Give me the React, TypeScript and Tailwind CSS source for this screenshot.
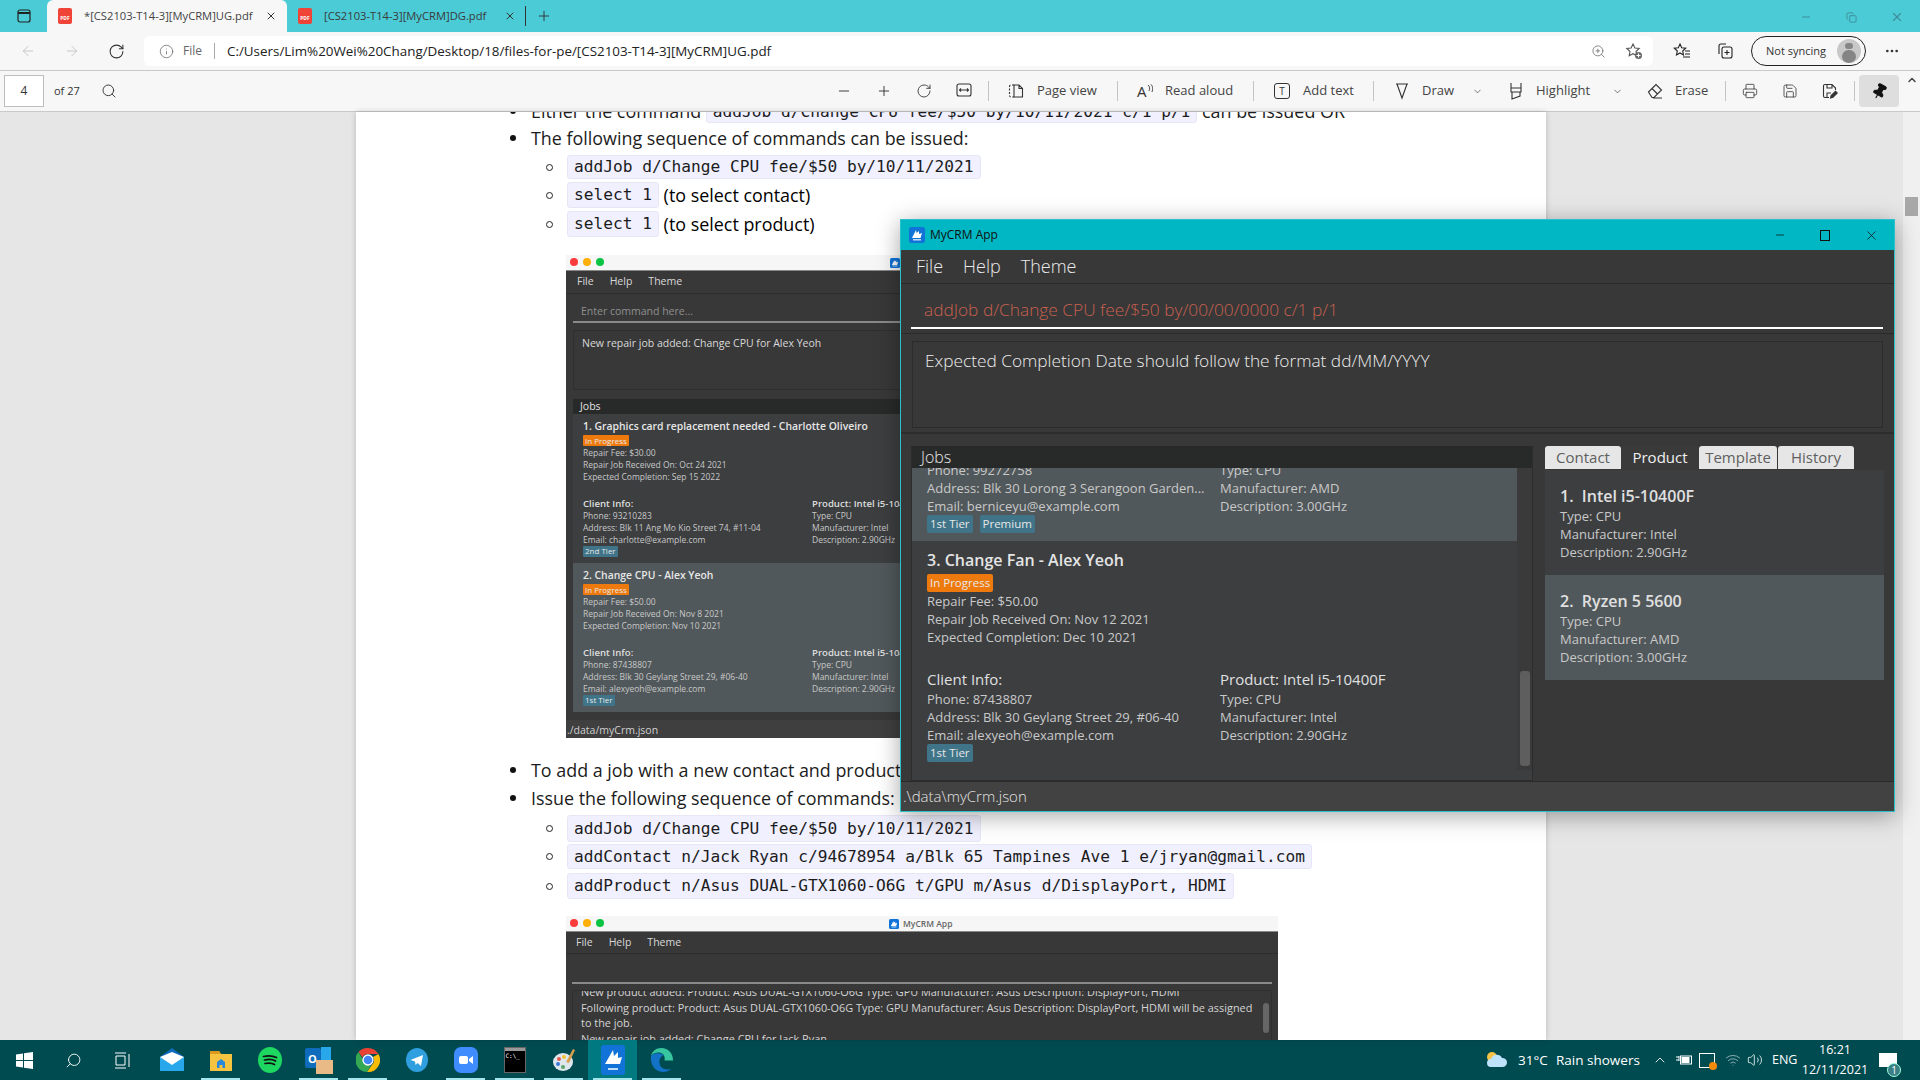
import type { ReactNode } from "react";
import {
  ArrowLeft,
  ArrowRight,
  ChevronDown,
  ChevronUp,
  Copy,
  Info,
  Minus,
  MoreHorizontal,
  Pin,
  Plus,
  Printer,
  RotateCw,
  Save,
  Search,
  Volume2,
  Wifi,
  X,
  ZoomIn,
} from "lucide-react";

const MONO = "font-['DejaVu_Sans_Mono',monospace]";

function PdfIcon() {
  return (
    <span className="flex h-4 w-[14px] shrink-0 items-end justify-center overflow-hidden rounded-[2px] bg-[#f04438] pb-[3px] text-[5px] font-bold leading-none text-white">
      PDF
    </span>
  );
}

function StarPlus() {
  return (
    <svg width="18" height="18" viewBox="0 0 18 18" fill="none" stroke="#555" strokeWidth="1.1" className="ml-[19px] mr-[10px] shrink-0">
      <path d="M8 2l1.900 4 4.300.5-3.200 3 .8 4.300L8 11.700 4.200 13.800l.8-4.300-3.200-3 4.300-.5z" />
      <circle cx="13.500" cy="13.500" r="3.500" fill="#666" stroke="none" />
      <path d="M13.500 11.500v4M11.500 13.500h4" stroke="#fff" />
    </svg>
  );
}

function Favorites() {
  return (
    <svg width="18" height="18" viewBox="0 0 18 18" fill="none" stroke="#222" strokeWidth="1.1" className="ml-[20px] shrink-0">
      <path d="M7 2l1.700 3.800 4 .4-3 2.800.8 4L7 11l-3.500 2 .8-4-3-2.800 4-.4z" />
      <path d="M12 9h5M12 12h5M10 15h7" />
    </svg>
  );
}

function Collections() {
  return (
    <svg width="18" height="18" viewBox="0 0 18 18" fill="none" stroke="#222" strokeWidth="1.1" className="ml-[25px] shrink-0">
      <path d="M3 12V4a2 2 0 0 1 2-2h5" />
      <rect x="6" y="5" width="10" height="11" rx="2" />
      <path d="M11 8v5M8.500 10.500h5" />
    </svg>
  );
}

function BrowserTabs() {
  return (
    <div className="flex h-8 items-end bg-[#4acbd6] text-[#333]">
      <div className="flex h-8 w-[47px] items-center pl-[17px]">
        <svg width="14" height="14" viewBox="0 0 14 14" fill="none" stroke="#222" strokeWidth="1.2">
          <rect x="1" y="1" width="12" height="12" rx="2" />
          <path d="M1 4h12" strokeWidth="2" />
        </svg>
      </div>
      <div className="flex h-8 w-[240px] items-center rounded-t-md bg-[#f7f7f7] pl-[11px]">
        <PdfIcon />
        <span className="ml-[12px] w-[174px] whitespace-nowrap text-[11.2px] text-[#444]">*[CS2103-T14-3][MyCRM]UG.pdf</span>
        <X size={12} className="ml-[7px]" />
      </div>
      <div className="flex h-8 w-[238px] items-center pl-[11px]">
        <PdfIcon />
        <span className="ml-[12px] w-[170px] whitespace-nowrap text-[11.2px] text-[#3a3a3a]">[CS2103-T14-3][MyCRM]DG.pdf</span>
        <X size={12} className="ml-[10px]" />
      </div>
      <div className="mb-[6px] h-5 w-px bg-[#333]" />
      <Plus size={16} strokeWidth={1.4} className="mb-2 ml-[10px]" />
      <div className="mb-2 ml-auto flex items-center text-[#3f8f97]">
        <Minus size={12} />
        <Copy size={11} className="ml-[34px]" />
        <X size={14} className="ml-[33px] mr-[16px]" />
      </div>
    </div>
  );
}

function AddressBar() {
  return (
    <div className="flex h-[39px] items-center border-b border-[#c9c9c9] bg-[#f7f7f7] text-[#333]">
      <ArrowLeft size={16} strokeWidth={1.4} className="ml-5 text-[#c4c4c4]" />
      <ArrowRight size={16} strokeWidth={1.4} className="ml-7 text-[#c4c4c4]" />
      <RotateCw size={17} strokeWidth={1.5} className="ml-7" />
      <div className="ml-[19px] flex h-[30px] w-[1509px] items-center rounded-md bg-white text-[12px]">
        <Info size={15} strokeWidth={1.2} className="ml-[15px] text-[#666]" />
        <span className="ml-[9px] text-[#666]">File</span>
        <span className="ml-3 h-4 w-px bg-[#aaa]" />
        <span className="ml-3 whitespace-nowrap text-[13.4px] text-[#222]">
          C:/Users/Lim%20Wei%20Chang/Desktop/18/files-for-pe/[CS2103-T14-3][MyCRM]UG.pdf
        </span>
        <ZoomIn size={15} strokeWidth={1.2} className="ml-auto text-[#666]" />
        <StarPlus />
      </div>
      <Favorites />
      <Collections />
      <div className="ml-[17px] flex h-[30px] w-[115px] items-center rounded-full border border-[#222] pl-[14px] text-[11px]">
        <span className="w-[66px] whitespace-nowrap">Not syncing</span>
        <span className="ml-[5px] flex h-[24px] w-[24px] flex-col items-center overflow-hidden rounded-full bg-[#c8c8c8]">
          <span className="mt-[4px] h-2 w-2 rounded-full bg-[#858585]" />
          <span className="mt-[1px] h-4 w-[14px] rounded-full bg-[#858585]" />
        </span>
      </div>
      <MoreHorizontal size={16} className="ml-[18px]" />
    </div>
  );
}

function Sep({ className }: { className: string }) {
  return <span className={`h-5 w-px shrink-0 bg-[#c4c4c4] ${className}`} />;
}

function Slot({ children }: { children: ReactNode }) {
  return <span className="flex w-10 shrink-0 justify-center">{children}</span>;
}

function ToolLabel({ className, children }: { className: string; children: ReactNode }) {
  return <span className={`shrink-0 whitespace-nowrap text-[13px] text-[#444] ${className}`}>{children}</span>;
}

function PdfToolbar() {
  return (
    <div className="flex h-[41px] items-center border-b border-[#c9c9c9] bg-[#f7f7f7] text-[#333]">
      <div className="ml-1 flex h-8 w-10 shrink-0 items-center justify-center border border-[#bdbdbd] bg-white text-[12px]">4</div>
      <span className="ml-[10px] w-[27px] shrink-0 whitespace-nowrap text-[11px]">of 27</span>
      <Search size={16} strokeWidth={1.4} className="ml-5 shrink-0" />
      <span className="ml-[707px] flex">
        <Slot><Minus size={16} strokeWidth={1.4} /></Slot>
        <Slot><Plus size={16} strokeWidth={1.4} /></Slot>
        <Slot><RotateCw size={16} strokeWidth={1.3} /></Slot>
        <Slot>
          <svg width="16" height="14" viewBox="0 0 16 14" fill="none" stroke="#333" strokeWidth="1.1">
            <rect x="1" y="1" width="14" height="12" rx="2" />
            <path d="M3.500 7h9M5 5.500 3.500 7 5 8.500M11 5.500 12.500 7 11 8.500" />
          </svg>
        </Slot>
      </span>
      <Sep className="ml-1" />
      <svg width="16" height="16" viewBox="0 0 16 16" fill="none" stroke="#333" strokeWidth="1.1" className="ml-[19px] shrink-0">
        <path d="M6 2H3a1.500 1.500 0 0 0-1.500 1.500v9A1.500 1.500 0 0 0 3 14h3" strokeDasharray="2 1.500" />
        <path d="M6 2h5l3.500 3.500V14H6z M11 2v3.500h3.500" />
      </svg>
      <ToolLabel className="ml-[13px] w-[62px]">Page view</ToolLabel>
      <Sep className="ml-[18px]" />
      <span className="ml-[19px] flex w-4 shrink-0 items-start">
        <span className="text-[15px] leading-none text-[#333]">A</span>
        <svg width="6" height="9" viewBox="0 0 6 9" fill="none" stroke="#333" strokeWidth="0.9" className="shrink-0">
          <path d="M1 1c2 1.500 2 4 1 6M3.500 0c2.500 2 2.500 5 1.500 8" />
        </svg>
      </span>
      <ToolLabel className="ml-3 w-[70px]">Read aloud</ToolLabel>
      <Sep className="ml-[18px]" />
      <span className="ml-5 flex h-4 w-4 shrink-0 items-center justify-center rounded-[3px] border border-[#333] text-[10px] leading-none">T</span>
      <ToolLabel className="ml-[13px] w-[52px]">Add text</ToolLabel>
      <Sep className="ml-[18px]" />
      <svg width="16" height="18" viewBox="0 0 16 18" fill="none" stroke="#333" strokeWidth="1.1" className="ml-5 shrink-0">
        <path d="M2 2h12M3 2l5 14 5-14" />
      </svg>
      <ToolLabel className="ml-3 w-[31px]">Draw</ToolLabel>
      <ChevronDown size={11} strokeWidth={1.4} className="ml-[19px] shrink-0" />
      <svg width="16" height="18" viewBox="0 0 16 18" fill="none" stroke="#333" strokeWidth="1.1" className="ml-[25px] shrink-0">
        <path d="M3 1v5h10V1M3 6v4h10V6M4 10v7l8-3v-4" />
      </svg>
      <ToolLabel className="ml-3 w-[58px]">Highlight</ToolLabel>
      <ChevronDown size={11} strokeWidth={1.4} className="ml-[18px] shrink-0" />
      <svg width="16" height="16" viewBox="0 0 16 16" fill="none" stroke="#333" strokeWidth="1.1" className="ml-[24px] shrink-0">
        <path d="M1.500 9 9 1.500 14.500 7 7 14.500H5zM5 5.500 10.500 11M6 15h9" />
      </svg>
      <ToolLabel className="ml-3 w-8">Erase</ToolLabel>
      <Sep className="ml-[18px]" />
      <Printer size={16} strokeWidth={1.2} className="ml-4 shrink-0" />
      <Save size={16} strokeWidth={1.2} className="ml-6 shrink-0" />
      <svg width="16" height="16" viewBox="0 0 16 16" fill="none" stroke="#333" strokeWidth="1.1" className="ml-6 shrink-0">
        <path d="M7 14.500H3a1.500 1.500 0 0 1-1.500-1.500V3A1.500 1.500 0 0 1 3 1.500h7L13.500 5v2M5 1.500V5h5V1.500M5 14v-4h4" />
        <path d="M8.500 15l.7-2.500 4.300-4.300 1.800 1.800-4.300 4.300z" fill="#333" />
      </svg>
      <Sep className="ml-4" />
      <span className="ml-1 flex h-8 w-10 shrink-0 items-center justify-center rounded-sm bg-[#dedede]">
        <Pin size={17} fill="#111" strokeWidth={1.5} className="rotate-[30deg] text-[#111]" />
      </span>
    </div>
  );
}

function Disc({ className }: { className: string }) {
  return <span className={`h-[6px] w-[6px] shrink-0 rounded-full bg-[#111] ${className}`} />;
}

function Ring() {
  return <span className="ml-[190px] h-[7px] w-[7px] shrink-0 rounded-full border-[1.5px] border-[#222]" />;
}

function Code({ className, children }: { className?: string; children: ReactNode }) {
  return (
    <span className={`flex h-full items-center whitespace-nowrap rounded-[3px] border border-[#e6e6f6] bg-[#f0f0ff] px-[6px] pt-px text-[16.2px] text-[#1c1c1c] ${MONO} ${className ?? ""}`}>
      {children}
    </span>
  );
}

function CodeRow({ className, children }: { className: string; children: ReactNode }) {
  return (
    <div className={`flex items-center ${className}`}>
      <Ring />
      <span className="ml-[14px] flex h-full items-center text-[17.9px]">{children}</span>
    </div>
  );
}

function Bullet({ className, children }: { className: string; children: ReactNode }) {
  return (
    <div className={`flex h-6 items-center whitespace-nowrap text-[17.9px] leading-6 text-[#1c1c1c] ${className}`}>
      <Disc className="ml-[154px]" />
      <span className="ml-[15px] flex h-6 items-center">{children}</span>
    </div>
  );
}

function CrmLogo({ size }: { size: number }) {
  return (
    <svg width={size} height={size} viewBox="0 0 16 16" className="shrink-0">
      <rect width="16" height="16" rx="2.500" fill="#1173d8" />
      <path d="M3 11 7 3l.5 3L10 4v3l3-1-1.500 5z" fill="#fff" />
      <rect x="4" y="12" width="8" height="1.500" fill="#bcdcf8" />
    </svg>
  );
}

function MacLights() {
  return (
    <span className="ml-1 flex items-center gap-[5px]">
      <span className="h-2 w-2 rounded-full bg-[#fc3b3b]" />
      <span className="h-2 w-2 rounded-full bg-[#fdb003]" />
      <span className="h-2 w-2 rounded-full bg-[#0bc443]" />
    </span>
  );
}

function MiniTag({ orange, children }: { orange?: boolean; children: ReactNode }) {
  return (
    <span className={`flex h-[11px] w-fit items-center rounded-[1px] px-[2px] text-[8px] leading-none text-[#e8e8e8] ${orange ? "bg-[#ee7a0d]" : "bg-[#3f7489]"}`}>
      {children}
    </span>
  );
}

type MiniJobProps = {
  title: string;
  fee: string;
  got: string;
  due: string;
  phone: string;
  address: string;
  email: string;
  tier: string;
  selected?: boolean;
};

function MiniJob({ title, fee, got, due, phone, address, email, tier, selected }: MiniJobProps) {
  return (
    <div className={`h-[149px] pl-[10px] pt-[4px] text-[8.5px] leading-[11.8px] text-[#c8c8c8] ${selected ? "bg-[#51585b]" : "bg-[#3c3e40]"}`}>
      <div className="h-[17px] whitespace-nowrap text-[10.4px] font-semibold leading-4 text-[#e6e6e6]">{title}</div>
      <MiniTag orange>In Progress</MiniTag>
      <div className="mt-[1px]">{fee}</div>
      <div>{got}</div>
      <div>{due}</div>
      <div className="mt-[15px] flex">
        <div className="w-[229px] shrink-0">
          <div className="text-[9.6px] font-semibold leading-[13px] text-[#dedede]">Client Info:</div>
          <div>{phone}</div>
          <div className="whitespace-nowrap">{address}</div>
          <div>{email}</div>
          <MiniTag>{tier}</MiniTag>
        </div>
        <div className="whitespace-nowrap">
          <div className="text-[9.6px] font-semibold leading-[13px] text-[#dedede]">Product: Intel i5-10400F</div>
          <div>Type: CPU</div>
          <div>Manufacturer: Intel</div>
          <div>Description: 2.90GHz</div>
        </div>
      </div>
    </div>
  );
}

function FirstShot() {
  return (
    <div className="ml-[210px] mt-[18px] flex h-[483px] w-[712px] flex-col overflow-hidden bg-[#383838] font-['Open_Sans',sans-serif]">
      <div className="flex h-[16px] shrink-0 items-start border-b border-[#888] bg-[#f6f6f6] pt-[3px]">
        <MacLights />
        <span className="ml-[286px]"><CrmLogo size={10} /></span>
      </div>
      <div className="flex h-[23px] shrink-0 items-center gap-[16px] border-b border-[#2d2d2d] pl-[11px] text-[10.5px] text-[#d8d8d8]">
        <span>File</span><span>Help</span><span>Theme</span>
      </div>
      <div className="mx-[7px] h-[29px] shrink-0 border-b-2 border-[#8a8a8a] pl-2 pt-[9px] text-[10.5px] leading-4 text-[#8f8f8f]">Enter command here...</div>
      <div className="mx-[7px] mt-[7px] h-[60px] shrink-0 border border-[#2f2f2f] pl-2 pt-[4px] text-[10.5px] leading-4 text-[#d8d8d8]">New repair job added: Change CPU for Alex Yeoh</div>
      <div className="mx-[7px] mt-[9px] shrink-0">
        <div className="h-[15px] bg-[#282a2a] pl-[7px] text-[10.5px] leading-[15px] text-[#e0e0e0]">Jobs</div>
        <MiniJob
          title="1. Graphics card replacement needed - Charlotte Oliveiro"
          fee="Repair Fee: $30.00"
          got="Repair Job Received On: Oct 24 2021"
          due="Expected Completion: Sep 15 2022"
          phone="Phone: 93210283"
          address="Address: Blk 11 Ang Mo Kio Street 74, #11-04"
          email="Email: charlotte@example.com"
          tier="2nd Tier"
        />
        <MiniJob
          selected
          title="2. Change CPU - Alex Yeoh"
          fee="Repair Fee: $50.00"
          got="Repair Job Received On: Nov 8 2021"
          due="Expected Completion: Nov 10 2021"
          phone="Phone: 87438807"
          address="Address: Blk 30 Geylang Street 29, #06-40"
          email="Email: alexyeoh@example.com"
          tier="1st Tier"
        />
      </div>
      <div className="mt-[8px] flex h-[18px] shrink-0 items-center bg-[#3f3f3f] pl-px pt-[4px] text-[10.5px] text-[#cfcfcf]">./data/myCrm.json</div>
    </div>
  );
}

function SecondShot() {
  return (
    <div className="ml-[210px] mt-[17px] h-[200px] w-[712px] bg-[#383838] font-['Open_Sans',sans-serif]">
      <div className="flex h-[16px] items-start border-b border-[#888] bg-[#f6f6f6] pt-[3px]">
        <MacLights />
        <span className="ml-[285px]"><CrmLogo size={10} /></span>
        <span className="ml-[4px] text-[8.5px] font-semibold leading-[10px] text-[#666]">MyCRM App</span>
      </div>
      <div className="flex h-[22px] items-center gap-[16px] border-b border-[#2d2d2d] pl-[10px] text-[10.5px] text-[#d8d8d8]">
        <span>File</span><span>Help</span><span>Theme</span>
      </div>
      <div className="mx-[6px] h-[30px] border-b-2 border-[#8a8a8a]" />
      <div className="relative mx-[6px] mt-[6px] h-[100px] overflow-hidden border border-[#2f2f2f] pl-2 text-[10.9px] leading-[15.5px] text-[#d4d4d4]">
        <div className="-mt-[7px] whitespace-nowrap">New product added: Product: Asus DUAL-GTX1060-O6G Type: GPU Manufacturer: Asus Description: DisplayPort, HDMI</div>
        <div className="whitespace-nowrap">Following product: Product: Asus DUAL-GTX1060-O6G Type: GPU Manufacturer: Asus Description: DisplayPort, HDMI will be assigned</div>
        <div>to the job.</div>
        <div>New repair job added: Change CPU for Jack Ryan</div>
        <span className="absolute right-[2px] top-[12px] h-[30px] w-[6px] rounded-full bg-[#666]" />
      </div>
    </div>
  );
}

function PdfPage() {
  return (
    <div className="ml-[356px] h-[928px] w-[1190px] shrink-0 overflow-hidden bg-white font-['Open_Sans',sans-serif] shadow-[0_0_6px_rgba(0,0,0,0.2)]">
      <Bullet className="-mt-[13px]">
        Either the command&nbsp;
        <span className="flex h-[24px] items-center"><Code>addJob d/Change CPU fee/$50 by/10/11/2021 c/1 p/1</Code></span>
        &nbsp;can be issued OR
      </Bullet>
      <Bullet className="mt-[3px]">The following sequence of commands can be issued:</Bullet>
      <CodeRow className="mt-[5px] h-6"><Code>addJob d/Change CPU fee/$50 by/10/11/2021</Code></CodeRow>
      <CodeRow className="mt-[3px] h-[26px]"><Code>select 1</Code>&nbsp;(to select contact)</CodeRow>
      <CodeRow className="mt-[3px] h-[26px]"><Code>select 1</Code>&nbsp;(to select product)</CodeRow>
      <FirstShot />
      <Bullet className="mt-[20px]">To add a job with a new contact and product:</Bullet>
      <Bullet className="mt-[4px]">Issue the following sequence of commands:</Bullet>
      <CodeRow className="mt-[5px] h-[27px]"><Code>addJob d/Change CPU fee/$50 by/10/11/2021</Code></CodeRow>
      <CodeRow className="mt-[2px] h-[25px]"><Code>addContact n/Jack Ryan c/94678954 a/Blk 65 Tampines Ave 1 e/jryan@gmail.com</Code></CodeRow>
      <CodeRow className="mt-[4px] h-[26px]"><Code>addProduct n/Asus DUAL-GTX1060-O6G t/GPU m/Asus d/DisplayPort, HDMI</Code></CodeRow>
      <SecondShot />
    </div>
  );
}

function DocArea() {
  return (
    <div className="flex h-[928px] bg-[#e6e6e6]">
      <PdfPage />
      <div className="ml-auto flex w-[17px] flex-col items-center bg-[#f0f0f0]">
        <ChevronUp size={12} strokeWidth={3} className="-mt-[38px] text-[#444]" />
        <span className="mt-[111px] h-[19px] w-[13px] bg-[#a8a8a8]" />
      </div>
    </div>
  );
}

function Tag({ orange, children }: { orange?: boolean; children: ReactNode }) {
  return (
    <span className={`flex h-[18px] items-center rounded-[2px] px-[3px] text-[11.5px] leading-none text-[#e8e8e8] ${orange ? "w-fit bg-[#ee7a0d]" : "bg-[#3f7489]"}`}>
      {children}
    </span>
  );
}

function Line({ children }: { children: ReactNode }) {
  return <div className="h-[18px] whitespace-nowrap text-[13px] leading-[18px] text-[#c9c9c9]">{children}</div>;
}

function JobsPanel() {
  return (
    <div className="ml-[10px] w-[622px] shrink-0 border-x border-b border-[#2c2c2c] bg-[#3c3e40]">
      <div className="h-[22px] bg-[#282a2a] pl-[9px] text-[16px] font-light leading-[22px] text-[#e8e8e8]">Jobs</div>
      <div className="flex h-[302px]">
        <div className="w-[605px] shrink-0 overflow-hidden">
          <div className="-mt-[7px] flex h-[80px] bg-[#51585b] pl-[15px]">
            <div className="w-[293px] shrink-0">
              <Line>Phone: 99272758</Line>
              <Line>Address: Blk 30 Lorong 3 Serangoon Garden...</Line>
              <Line>Email: berniceyu@example.com</Line>
              <div className="flex gap-[7px]">
                <Tag>1st Tier</Tag>
                <Tag>Premium</Tag>
              </div>
            </div>
            <div>
              <Line>Type: CPU</Line>
              <Line>Manufacturer: AMD</Line>
              <Line>Description: 3.00GHz</Line>
            </div>
          </div>
          <div className="h-[229px] pl-[15px] pt-[7px]">
            <div className="h-6 text-[16px] font-semibold leading-6 text-[#e4e4e4]">3. Change Fan - Alex Yeoh</div>
            <div className="mt-[2px]"><Tag orange>In Progress</Tag></div>
            <Line>Repair Fee: $50.00</Line>
            <Line>Repair Job Received On: Nov 12 2021</Line>
            <Line>Expected Completion: Dec 10 2021</Line>
            <div className="mt-[22px] flex">
              <div className="w-[293px] shrink-0">
                <div className="h-[22px] text-[15px] font-normal leading-[22px] text-[#e0e0e0]">Client Info:</div>
                <Line>Phone: 87438807</Line>
                <Line>Address: Blk 30 Geylang Street 29, #06-40</Line>
                <Line>Email: alexyeoh@example.com</Line>
                <div className="flex"><Tag>1st Tier</Tag></div>
              </div>
              <div>
                <div className="h-[22px] whitespace-nowrap text-[15px] font-normal leading-[22px] text-[#e0e0e0]">Product: Intel i5-10400F</div>
                <Line>Type: CPU</Line>
                <Line>Manufacturer: Intel</Line>
                <Line>Description: 2.90GHz</Line>
              </div>
            </div>
          </div>
        </div>
        <div className="flex w-[15px] flex-col items-center bg-[#3a3a3a]">
          <span className="mt-[203px] h-[95px] w-[10px] rounded-[3px] bg-[#5e5e5e]" />
        </div>
      </div>
    </div>
  );
}

function Product({ name, type, maker, desc, selected }: { name: string; type: string; maker: string; desc: string; selected?: boolean }) {
  return (
    <div className={`h-[105px] pl-[15px] pt-[14px] ${selected ? "bg-[#51585b]" : "bg-[#3c3e40]"}`}>
      <div className="h-[23px] whitespace-pre text-[16px] font-semibold leading-6 text-[#e0e0e0]">{name}</div>
      <Line>{type}</Line>
      <Line>{maker}</Line>
      <Line>{desc}</Line>
    </div>
  );
}

function TabLabel({ active, className, children }: { active?: boolean; className: string; children: ReactNode }) {
  return (
    <div className={`flex h-[23px] items-center justify-center rounded-t-[3px] text-[15px] ${active ? "bg-[#3a3a3a] text-[#f0f0f0]" : "bg-[#e6e6e6] text-[#5f5f5f]"} ${className}`}>
      {children}
    </div>
  );
}

function ProductPanel() {
  return (
    <div className="ml-3 w-[339px] shrink-0">
      <div className="flex">
        <TabLabel className="w-[76px]">Contact</TabLabel>
        <TabLabel active className="w-[78px]">Product</TabLabel>
        <TabLabel className="w-[78px]">Template</TabLabel>
        <TabLabel className="ml-px w-[76px]">History</TabLabel>
      </div>
      <div className="mt-px">
        <Product name="1.  Intel i5-10400F" type="Type: CPU" maker="Manufacturer: Intel" desc="Description: 2.90GHz" />
        <Product selected name="2.  Ryzen 5 5600" type="Type: CPU" maker="Manufacturer: AMD" desc="Description: 3.00GHz" />
      </div>
    </div>
  );
}

function CrmWindow() {
  return (
    <div className="absolute left-[900px] top-[219px] flex h-[593px] w-[995px] flex-col border border-[#2bc0cb] bg-[#383838] font-['Open_Sans',sans-serif] shadow-[0_4px_22px_rgba(0,0,0,0.35)]">
      <div className="flex h-[30px] shrink-0 items-center bg-[#00b7c3] text-[#111]">
        <span className="ml-2"><CrmLogo size={16} /></span>
        <span className="ml-[5px] text-[12px]">MyCRM App</span>
        <Minus size={12} strokeWidth={1.5} className="ml-auto" />
        <span className="ml-[34px] h-[11px] w-[10px] border border-[#111]" />
        <X size={15} strokeWidth={1.2} className="ml-[34px] mr-[15px]" />
      </div>
      <div className="flex h-[34px] shrink-0 items-center gap-5 border-b border-[#2a2a2a] pl-[15px] text-[18px] font-light text-[#eaeaea]">
        <span>File</span><span>Help</span><span>Theme</span>
      </div>
      <div className="h-[50px] shrink-0 border-b border-[#2a2a2a] pl-[10px] pr-[11px]">
        <div className="h-[45px] border-b-2 border-white pl-[13px] pt-[14px] text-[17.3px] font-light leading-6 text-[#c8604f]">
          addJob d/Change CPU fee/$50 by/00/00/0000 c/1 p/1
        </div>
      </div>
      <div className="h-[100px] shrink-0 border-b-2 border-[#2d2d2d] pl-[11px] pr-[11px] pt-[7px]">
        <div className="h-[87px] border border-[#2c2c2c] pl-3 pt-[7px] text-[17.3px] font-light leading-6 text-[#ececec]">
          Expected Completion Date should follow the format dd/MM/YYYY
        </div>
      </div>
      <div className="flex h-[347px] shrink-0 pt-[12px]">
        <JobsPanel />
        <ProductPanel />
      </div>
      <div className="flex flex-1 items-center border-t border-[#2a2a2a] bg-[#424242] pl-[2px] text-[15px] font-light text-[#e4e4e4]">
        .\data\myCrm.json
      </div>
    </div>
  );
}

function Task({ active, open, children }: { active?: boolean; open?: boolean; children: ReactNode }) {
  return (
    <div className={`relative flex h-10 w-[49px] shrink-0 items-center justify-center ${active ? "bg-[#007a80]" : ""}`}>
      {children}
      {open && <span className="absolute bottom-0 left-[5px] h-[2px] w-[39px] bg-[#a5e6ec]" />}
    </div>
  );
}

function Taskbar() {
  return (
    <div className="flex h-10 items-center bg-[#004b50] font-['Open_Sans',sans-serif] text-white">
      <Task>
        <svg width="17" height="17" viewBox="0 0 17 17" fill="#fff"><path d="M0 2.500 7 1.500V8H0zM8 1.300 17 0v8H8zM0 9h7v6.500l-7-1zM8 9h9v8l-9-1.300z" /></svg>
      </Task>
      <Task><Search size={17} strokeWidth={1.3} className="-scale-x-100" /></Task>
      <Task>
        <svg width="17" height="17" viewBox="0 0 17 17" fill="none" stroke="#fff" strokeWidth="1"><path d="M1 1h11M1 16h11M2 4h9v9H2zM15 2v13" /></svg>
      </Task>
      <Task>
        <svg width="26" height="26" viewBox="0 0 26 26"><path d="M13 1 25 10v14H1V10z" fill="#0f6cbd" /><path d="M1 10h24v14H1z" fill="#28a8ea" /><path d="M1 10l12 8 12-8-12-5z" fill="#fff" /></svg>
      </Task>
      <Task open>
        <svg width="24" height="24" viewBox="0 0 24 24"><path d="M1 3h9l2 3h11v17H1z" fill="#f5c33f" /><path d="M1 3h9l2 3H1z" fill="#d99a1f" /><path d="M8 14l4-3 4 3v6h-2.500v-3h-3v3H8z" fill="#2b88d8" /></svg>
      </Task>
      <Task>
        <svg width="24" height="26" viewBox="0 0 24 26" fill="none"><ellipse cx="12" cy="13" rx="12" ry="13" fill="#1ed760" /><path d="M5.500 9.500c4-1 9-1 13 1M6.500 13c3.500-.8 8-.8 11 1M7 16.500c3-.6 7-.6 9.500 1" stroke="#111" strokeWidth="1.700" strokeLinecap="round" /></svg>
      </Task>
      <Task open>
        <span className="relative flex h-7 w-7 items-start">
          <span className="mt-[2px] flex h-[20px] w-[16px] items-center justify-center rounded-[2px] bg-[#0f6cbd] text-[11px] font-bold leading-none text-white">O</span>
          <span className="mt-[1px] h-[17px] w-[10px] bg-[#28a8ea]" />
          <span className="absolute bottom-0 right-0 h-[14px] w-[17px] bg-[#e9ba85]" />
        </span>
      </Task>
      <Task open>
        <svg width="24" height="26" viewBox="0 0 24 24">
          <path d="M12 0a12 12 0 0 1 10.400 6H12a6 6 0 0 0-5.500 3.500L2.500 4A12 12 0 0 1 12 0z" fill="#ea4335" />
          <path d="M22.400 6A12 12 0 0 1 11 24l5.200-7.500A6 6 0 0 0 17 9l5.400-3z" fill="#fbbc05" />
          <path d="M2.500 4l5 8.500a6 6 0 0 0 7.500 4.800L11 24A12 12 0 0 1 2.500 4z" fill="#34a853" />
          <circle cx="12" cy="12" r="5" fill="#4285f4" stroke="#fff" strokeWidth="1.300" />
        </svg>
      </Task>
      <Task>
        <svg width="22" height="24" viewBox="0 0 22 24"><ellipse cx="11" cy="12" rx="11" ry="12" fill="#2f9fe0" /><path d="M4.500 12 17 7l-2 11-3.500-3-2 2-.5-3.500z" fill="#fff" /></svg>
      </Task>
      <Task open>
        <svg width="24" height="26" viewBox="0 0 24 26"><rect width="24" height="26" rx="7" fill="#3f8cff" /><rect x="5" y="9" width="9" height="8" rx="2" fill="#fff" /><path d="M15 12l4-3v8l-4-3z" fill="#fff" /></svg>
      </Task>
      <Task open>
        <span className="flex h-[26px] w-[22px] flex-col border border-[#666] bg-black">
          <span className="h-[3px] bg-[#9a9a9a]" />
          <span className="pl-px pt-[2px] font-['DejaVu_Sans_Mono',monospace] text-[6px] leading-none text-white">C:\_</span>
        </span>
      </Task>
      <Task open>
        <svg width="24" height="26" viewBox="0 0 24 26"><ellipse cx="11" cy="15" rx="10" ry="9" fill="#dfe7ee" /><circle cx="7" cy="12" r="2" fill="#e25b4a" /><circle cx="12" cy="10" r="2" fill="#f1c232" /><circle cx="6" cy="17" r="2" fill="#3c78d8" /><circle cx="11" cy="20" r="2" fill="#5aa469" /><path d="M14 15 21 2l2 1-6 13z" fill="#d8a04f" /></svg>
      </Task>
      <Task active open>
        <svg width="24" height="30" viewBox="0 0 24 30"><rect width="24" height="30" rx="3" fill="#1173d8" /><path d="M4 19 12 5l1 6 4-4v6l4-1-2 7z" fill="#fff" /><rect x="7" y="23" width="10" height="2" fill="#bcdcf8" /></svg>
      </Task>
      <Task open>
        <svg width="24" height="26" viewBox="0 0 24 26">
          <path d="M23 13C23 6 18 1 11.500 1 6 1 2 4.500 1 9c2-3 5.500-4 8.500-3.500 4 .7 6 4 5 8h8.500z" fill="#38c6a0" />
          <path d="M1 9C0 16 4 25 13 25c3 0 6-1 8-3-6 1.500-11-1-11.500-6C9 12 11 9 14 8 8 5 3 6 1 9z" fill="#1172c6" />
        </svg>
      </Task>
      <span className="ml-[800px] flex w-[22px] shrink-0 justify-center">
        <svg width="22" height="18" viewBox="0 0 22 18"><circle cx="6" cy="6" r="5" fill="#f6c445" /><path d="M5 16a4 4 0 0 1 0-8 6 6 0 0 1 11-1 4.500 4.500 0 0 1 1 9z" fill="#bfe3fa" /></svg>
      </span>
      <span className="ml-[10px] w-[29px] shrink-0 whitespace-nowrap text-[13.5px]">31°C</span>
      <span className="ml-[9px] w-[81px] shrink-0 whitespace-nowrap text-[13.5px]">Rain showers</span>
      <ChevronUp size={16} strokeWidth={1.3} className="ml-[15px] shrink-0" />
      <svg width="18" height="12" viewBox="0 0 18 12" fill="none" stroke="#fff" strokeWidth="1" className="ml-[7px] shrink-0"><path d="M1 3h3M1 6h3M4 2v5" /><rect x="5.500" y="2" width="11" height="8" /><rect x="7" y="3.500" width="7" height="5" fill="#fff" /></svg>
      <span className="relative ml-[6px] h-[15px] w-[16px] shrink-0 border border-white">
        <span className="absolute -bottom-[3px] -right-[3px] h-[8px] w-[8px] rounded-full bg-[#f58a0b]" />
      </span>
      <Wifi size={16} strokeWidth={1.2} className="ml-[10px] shrink-0 text-[#a9c4c6]" />
      <Volume2 size={16} strokeWidth={1.2} className="ml-[6px] shrink-0" />
      <span className="ml-[9px] w-6 shrink-0 whitespace-nowrap text-[12.5px]">ENG</span>
      <span className="ml-[10px] flex w-[58px] shrink-0 flex-col items-center whitespace-nowrap text-[12.5px] leading-[20px]">
        <span>16:21</span>
        <span>12/11/2021</span>
      </span>
      <span className="relative ml-[15px] h-[14px] w-[18px] shrink-0 bg-white">
        <span className="absolute -bottom-[10px] left-[8px] flex h-[14px] w-[14px] items-center justify-center rounded-full border border-[#9fd] bg-[#3c7f85] text-[10px] leading-none">1</span>
      </span>
    </div>
  );
}

export default function App() {
  return (
    <div className="relative h-[1080px] w-[1920px] overflow-hidden bg-[#e6e6e6] font-['Open_Sans',sans-serif]">
      <BrowserTabs />
      <AddressBar />
      <PdfToolbar />
      <DocArea />
      <Taskbar />
      <CrmWindow />
    </div>
  );
}
